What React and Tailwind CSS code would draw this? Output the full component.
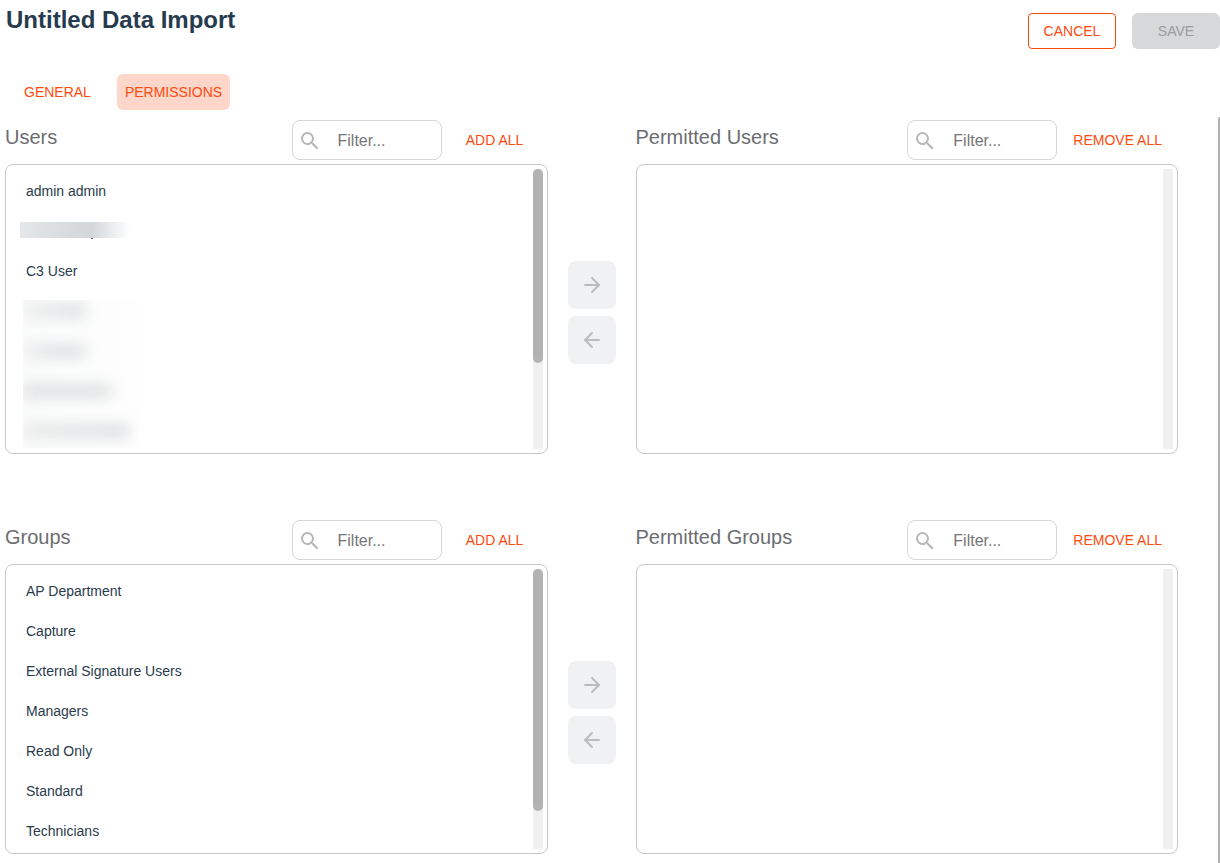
import { ArrowLeft, ArrowRight } from "lucide-react";
import { MdSearch } from "react-icons/md";

function RedactedName() {
  return (
    <li className="h-10 pt-[11px] pl-3.5" aria-hidden="true">
      <div className="h-4 w-[110px] bg-linear-to-r from-[#e4e7e8] via-[#d3d7da] via-65% to-white" />
      <div className="ml-[71px] h-px w-0.5 bg-[#5a6876]" />
    </li>
  );
}

function RedactedBlock() {
  return (
    <li className="h-40 pt-[9px] pl-[17px]" aria-hidden="true">
      <div className="flex h-[148px] w-[117px] flex-col gap-[26px] overflow-hidden bg-linear-to-r from-[#fafbfb] to-[#fefefe] pt-1">
        <div className="h-3.5 w-[62px] shrink-0 bg-linear-to-r from-[#eceeee] to-[#dbdfe1] blur-[7px]" />
        <div className="h-3.5 w-[62px] shrink-0 bg-linear-to-r from-[#eeefef] via-[#dfe1e3] to-[#e0e2e4] blur-[7px]" />
        <div className="h-3.5 w-[88px] shrink-0 bg-[#dfe1e2] blur-[7px]" />
        <div className="h-3.5 w-[106px] shrink-0 bg-linear-to-r from-[#e8eaea] to-[#dcdee0] blur-[7px]" />
      </div>
    </li>
  );
}

function Item({ children }) {
  return <li className="flex h-10 items-center pl-5">{children}</li>;
}

function ListPanel({ title, action, thumb, children }) {
  return (
    <section className="min-w-0 flex-1">
      <div className="flex h-10 items-center gap-2 pr-2">
        <h2 className="mb-1.5 flex-1 text-xl text-[#6b6e71]">{title}</h2>
        <label className="flex h-10 w-[150px] items-center gap-4 rounded-lg border border-[#d6d7d9] pt-0.5 pl-[5px]">
          <MdSearch className="size-6 shrink-0 text-[#b5b7b9]" />
          <input
            type="text"
            placeholder="Filter..."
            aria-label={`Filter ${title}`}
            className="w-full min-w-0 bg-transparent text-base text-[#2a3b4c] outline-none placeholder:text-[#757575]"
          />
        </label>
        <button type="button" className="h-9 min-w-[90px] px-2 text-sm whitespace-nowrap text-[#ff4a0c]">
          {action}
        </button>
      </div>
      <div className="mt-1 flex rounded-lg border border-[#c6c7c9] py-1 pr-1">
        <ul className="h-[280px] flex-1 overflow-hidden py-0.5 text-sm text-[#2a3b4c]">{children}</ul>
        <div className="w-2.5 bg-[#f0f0f0]">
          {thumb && <div className={`rounded-full bg-[#b2b2b2] ${thumb}`} />}
        </div>
      </div>
    </section>
  );
}

function MoveButton({ label, icon: Icon }) {
  return (
    <button
      type="button"
      aria-label={label}
      disabled
      className="flex size-12 items-center justify-center rounded-lg bg-[#f0f1f3] text-[#bbbcbe]"
    >
      <Icon className="size-6" strokeWidth={2} />
    </button>
  );
}

function Transfer({ name, thumb, children }) {
  return (
    <div className="flex gap-5">
      <ListPanel title={name} action="ADD ALL" thumb={thumb}>
        {children}
      </ListPanel>
      <div className="flex flex-col gap-[7px] pt-[141px]">
        <MoveButton label={`Permit ${name}`} icon={ArrowRight} />
        <MoveButton label={`Remove ${name}`} icon={ArrowLeft} />
      </div>
      <ListPanel title={`Permitted ${name}`} action="REMOVE ALL" />
    </div>
  );
}

const groups = [
  "AP Department",
  "Capture",
  "External Signature Users",
  "Managers",
  "Read Only",
  "Standard",
  "Technicians",
];

export default function App() {
  return (
    <div className="flex min-h-screen flex-col bg-white font-['Liberation_Sans',Arial,sans-serif]">
      <header className="flex items-start justify-between pl-1.5">
        <h1 className="pt-1 text-2xl font-bold text-[#263b4e]">Untitled Data Import</h1>
        <div className="flex gap-4 pt-[13px] text-sm">
          <button type="button" className="h-9 w-[88px] rounded border border-[#ff4a0c] text-[#ff4a0c]">
            CANCEL
          </button>
          <button type="button" disabled className="h-9 w-[88px] rounded-md bg-[#d7d8da] text-[#9a9c9e]">
            SAVE
          </button>
        </div>
      </header>
      <nav className="mt-[25px] flex gap-[18px] pl-4 text-sm text-[#ff4a0c]">
        <button type="button" className="h-9 rounded-md px-2">
          GENERAL
        </button>
        <button type="button" aria-current="page" className="h-9 rounded-md bg-[#ffd7ca] px-2">
          PERMISSIONS
        </button>
      </nav>
      <main className="mt-[7px] flex flex-1">
        <div className="flex min-w-0 flex-1 flex-col gap-[66px] pt-[3px] pr-10 pb-2 pl-[5px]">
          <Transfer name="Users" thumb="h-[194px]">
            <Item>admin admin</Item>
            <RedactedName />
            <Item>C3 User</Item>
            <RedactedBlock />
          </Transfer>
          <Transfer name="Groups" thumb="h-[242px]">
            {groups.map((group) => (
              <Item key={group}>{group}</Item>
            ))}
          </Transfer>
        </div>
        <div className="w-0.5 rounded-tl-full bg-[#b2b2b2]" />
      </main>
    </div>
  );
}
